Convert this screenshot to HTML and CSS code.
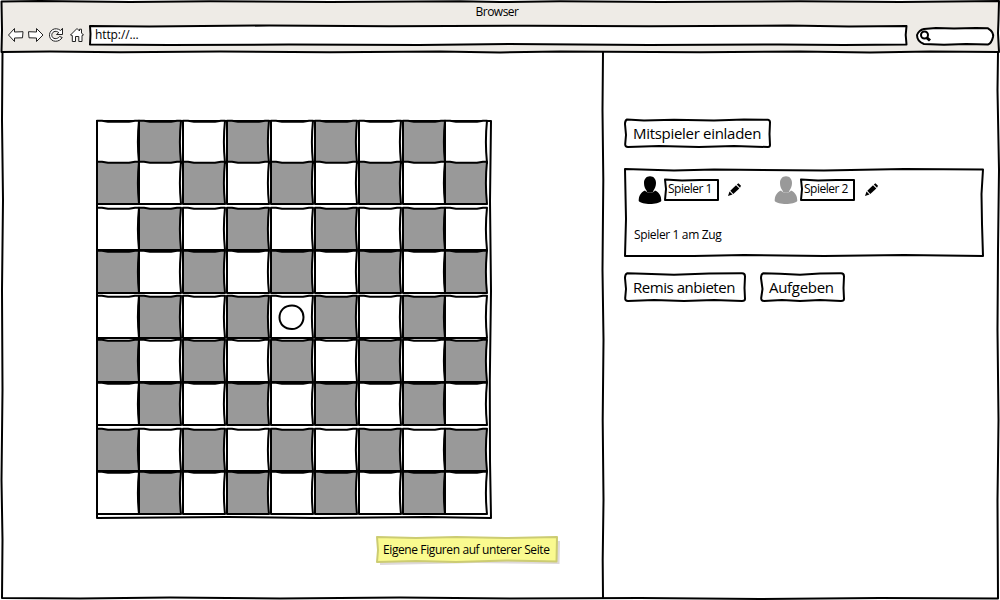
FILE: index.html
```html
<!DOCTYPE html>
<html lang="de">
<head>
<meta charset="utf-8">
<title>Browser</title>
<link rel="stylesheet" href="styles.css">
</head>
<body>
<svg class="defs" width="0" height="0">
  <defs>
    <path id="cell" d="M0 -.3L5 -.3L11 .8H32L38 -.3H42Q39.800 21 42 42H0Z"/>
    <g id="row-light" class="cells">
      <use href="#cell" class="light" x="0"/><use href="#cell" class="dark" x="42"/><use href="#cell" class="light" x="86"/><use href="#cell" class="dark" x="130"/><use href="#cell" class="light" x="174"/><use href="#cell" class="dark" x="218"/><use href="#cell" class="light" x="262"/><use href="#cell" class="dark" x="306"/><use href="#cell" class="light" x="348"/>
    </g>
    <g id="row-dark" class="cells">
      <use href="#cell" class="dark" x="0"/><use href="#cell" class="light" x="42"/><use href="#cell" class="dark" x="86"/><use href="#cell" class="light" x="130"/><use href="#cell" class="dark" x="174"/><use href="#cell" class="light" x="218"/><use href="#cell" class="dark" x="262"/><use href="#cell" class="light" x="306"/><use href="#cell" class="dark" x="348"/>
    </g>
    <g id="person"><path d="M11 -.8C14.800 -.8 17 2 17 6C17 9 15.800 12 14.500 13.500C15 16.500 7 16.500 7.500 13.500C6 12 5 9 5 6C5 2 7.200 -.8 11 -.8Z"/><path d="M6 13.500C8 16.500 14 16.500 16 13.500C20.500 15.500 22.300 19 22.300 24C19 28 3 28 -.3 24C-.3 19 1.500 15.500 6 13.500Z"/></g>
    <g id="pencil"><path d="M0 13L1.500 8.500L4.500 11.500Z"/><path d="M2.300 7.700L8 2.300L11.300 5.500L5.300 10.900Z"/><path d="M8.800 1.600L10.400 .2L13 2.800L12 4.800Z"/></g>
  </defs>
</svg>
<div class="window">
  <svg class="ink" viewBox="0 0 1000 600">
    <path class="chrome" d="M1.500 1.500L40 1L130 2L210 1.300L330 2L460 1.300L500 2L560 1.300L660 2L800 1.300L900 2L999 1L998.500 20L998 33L999 52L930 51.500L870 52.500L800 51.500L700 52.300L560 51.500L500 52.500L440 51.500L330 52.300L220 51.500L120 52.300L50 51.500L1.500 52L2 30Z"/>
    <path d="M2.500 52L2 120L3 200L2 290L2.500 390L1.500 480L2.500 540L2 598L80 598.500L170 597.500L280 598.500L400 597.500L510 598.500L640 598L760 599L880 598L998 598.500L997.500 500L998.500 420L997.500 330L998 250L999 170L997.500 90L998 52"/>
    <path d="M603 52L602.500 110L603.300 180L602.500 270L603.500 340L602.700 420L603.500 500L602.700 560L603 598"/>
  </svg>
  <div class="content">
    <header>
      <div class="title">Browser</div>
      <nav>
        <svg class="nav-icons" viewBox="0 0 78 16">
          <path d="M.5 8L6.500 1.500V5L15 4.700L14.500 10.800L6.500 11V14.500Z"/>
          <path d="M35 8L28.500 1.500V5L20.500 4.700L21 10.800L28.500 11V14.500Z"/>
          <path d="M52.700 3.500L54.500 1.300V7.500H48.500L50.800 5.600C47.500 2.800 43.500 5 43.800 8.500C44.200 12.300 49.500 12.700 51.600 9.500L54.200 10.500C51.500 15.500 43 15.800 41.600 9.500C40.500 3.500 47 -.8 52.700 3.500Z"/>
          <path d="M62.500 8L69 1.500L71.500 4V2.200H73.500V6L75.500 8L74 8.500V14.500H70.800V9.500H67.500V14.500H64.300V8.500Z"/>
        </svg>
        <div class="box url">
          <svg class="ink" viewBox="0 0 818 21"><path class="paper" d="M1 1L60 1.500L180 .5L300 1.300L440 .7L560 1.300L700 .5L760 1.500L817.500 1L816.700 10L817.500 19.500L755 20L690 19.500L560 20L420 19L330 20L200 19.500L80 20L1 19.500L1.500 9Z"/></svg>
          <span>http://...</span>
        </div>
        <svg class="search" viewBox="0 0 78 19"><path class="paper" d="M8 2L20 1L38 1.500L60 1L72 1.300Q78 5 77 10Q75.500 16.500 72 17.500L50 17L28 17.800L8 17Q1 14.500 1 8Q3 3 8 2Z"/><circle cx="8.500" cy="8" r="3.500"/><path class="handle" d="M11 10.800L14 13.500"/></svg>
      </nav>
    </header>
    <main>
      <section class="game">
        <div class="board">
          <svg class="ink" viewBox="0 0 394 397"><path d="M0 0H394L393 80L394 170L392.800 260L393 340L394 397L330 396L220 397L130 396L0 397Z"/></svg>
          <div class="rows">
            <svg><use href="#row-light"/></svg>
            <svg><use href="#row-dark"/></svg>
            <svg><use href="#row-light"/></svg>
            <svg><use href="#row-dark"/></svg>
            <svg><use href="#row-light"/><path d="M195 9.500C202 9.500 206.500 15 206.500 21C206.500 28 201.500 33 195 33C187.500 33 182.500 28 182.500 21.500C182.500 14.500 187.500 9.500 195 9.500Z"/></svg>
            <svg><use href="#row-dark"/></svg>
            <svg><use href="#row-light"/></svg>
            <svg><use href="#row-dark"/></svg>
            <svg><use href="#row-light"/></svg>
          </div>
        </div>
        <div class="box note">
          <svg class="ink" viewBox="0 0 182 27"><path class="shadow" d="M4 4L184 5L183.500 28L100 27L4 29Z"/><path class="sticky" d="M1 1L40 2L80 1L130 2L181 1L180.500 25.500L130 24.500L80 26L40 25L1 26L2 14Z"/></svg>
          <span>Eigene Figuren auf unterer Seite</span>
        </div>
      </section>
      <aside>
        <div class="box button invite">
          <svg class="ink" viewBox="0 0 147 29"><path d="M3 .5L20 1.500L50 .7L90 1.500L120 .5L144 .7Q146 1 146 3.500L145.500 15L146 26Q146 28 144 28L110 27L75 28L35 27L4 28Q1 28 1.200 25L2 16L1 5Q1 1.500 3 .5Z"/></svg>
          <span>Mitspieler einladen</span>
        </div>
        <div class="box players">
          <svg class="ink" viewBox="0 0 360 88"><path d="M1 0L50 1.500L90 .5L200 1.500L280 0L359 .5L357.500 25L358 55L359 87L280 86L200 87L120 86L70 87L1 87L2 50Z"/></svg>
          <div class="players-content">
            <div class="player-row">
              <svg class="person" viewBox="0 0 22 28"><use href="#person"/></svg>
              <div class="box name"><svg class="ink" viewBox="0 0 55 22"><path d="M1 .5L18 1.500L36 1H54V21H1L2 10Z"/></svg><span>Spieler 1</span></div>
              <svg class="pencil" viewBox="0 0 13 13"><use href="#pencil"/></svg>
              <svg class="person waiting" viewBox="0 0 22 28"><use href="#person"/></svg>
              <div class="box name"><svg class="ink" viewBox="0 0 55 22"><path d="M1 .5L18 1.500L36 1H54V21H1L2 10Z"/></svg><span>Spieler 2</span></div>
              <svg class="pencil second" viewBox="0 0 13 13"><use href="#pencil"/></svg>
            </div>
            <div class="turn">Spieler 1 am Zug</div>
          </div>
        </div>
        <div class="actions">
          <div class="box button draw">
            <svg class="ink" viewBox="0 0 122 29"><path d="M3 .3L20 .8L50 1.800L85 .6L118 .3Q121 .3 121 3.500L120.500 15L121 26Q121 28 118 28L90 27L60 28L30 27L4 28Q1 28 1.200 25L2 16L1 5Q1 1.300 3 .3Z"/></svg>
            <span>Remis anbieten</span>
          </div>
          <div class="box button resign">
            <svg class="ink" viewBox="0 0 85 29"><path d="M3 .3L20 .8L40 1.800L60 .6L81 .3Q84 .3 84 3.500L83.500 15L84 26Q84 28 81 28L60 27L40 28L22 27L4 28Q1 28 1.200 25L2.500 16L1 5Q1 1.300 3 .3Z"/></svg>
            <span>Aufgeben</span>
          </div>
        </div>
      </aside>
    </main>
  </div>
</div>
</body>
</html>
```
FILE: styles.css
```css
* { box-sizing: border-box; }
body {
  margin: 0;
  background: #fff;
  color: #000;
  font: 12px/16px "Open Sans", "Noto Sans", sans-serif;
  letter-spacing: -.36px;
  overflow: hidden;
}
.defs { display: block; }
svg { display: block; overflow: visible; fill: none; stroke: #000; stroke-width: 2; stroke-linejoin: round; }
.window, .box, .board { display: grid; }
.window > *, .box > *, .board > * { grid-area: 1 / 1; min-width: 0; min-height: 0; }
.ink { width: 100%; height: 100%; }
.window { width: 1000px; height: 600px; }
.chrome { fill: #eeebe6; }
.paper { fill: #fff; }
.box { align-items: center; }
.box span { white-space: nowrap; }

header { height: 52px; }
.title { height: 25px; padding: 4px 6px 0 0; text-align: center; letter-spacing: -.5px; }
nav { display: flex; }
.nav-icons { width: 78px; height: 16px; margin: 2px 3px 0 8px; fill: #fff; stroke: #222; stroke-width: 1; }
.url { width: 818px; height: 21px; }
.url span { padding: 0 0 2px 6px; letter-spacing: -.1px; }
.search { width: 78px; height: 19px; margin: 2px 0 0 9px; }
.handle { stroke-width: 3; }

main { display: flex; }
.game { width: 603px; padding: 69px 0 0 97px; }
.board { width: 394px; height: 397px; }
.rows { display: grid; grid-template-rows: 41px 46px 43px 45px 44px 43px 46px 43px 42px; }
.rows svg { width: 390px; height: 42px; }
.light { fill: #fff; }
.dark { fill: #999; }
.note { width: 182px; height: 27px; margin: 18px 0 0 279px; }
.note span { padding-left: 7px; letter-spacing: -.4px; }
.shadow { fill: #ded9da; stroke: none; }
.sticky { fill: #fafa8f; stroke: #cccc72; }

aside { padding: 67px 0 0 21px; }
.button { height: 29px; font-size: 15px; line-height: 20px; letter-spacing: -.3px; }
.button span { padding: 0 0 2px 9px; }
.invite { width: 147px; }
.players { width: 360px; height: 88px; margin: 21px 0 16px; align-items: stretch; }
.player-row { display: flex; padding: 8px 0 0 15px; }
.person { width: 22px; height: 28px; fill: #000; stroke: none; }
.waiting { fill: #999; margin-left: 34px; }
.name { width: 55px; height: 22px; margin: 2px 0 0 3px; }
.name span { padding: 0 0 2px 4px; letter-spacing: -.5px; }
.pencil { width: 13px; height: 13px; margin: 6px 0 0 9px; fill: #000; stroke: none; }
.second { margin-left: 10px; }
.turn { padding: 22px 0 0 10px; }
.actions { display: flex; gap: 14px; }
.draw { width: 122px; }
.draw span { letter-spacing: -.45px; }
.resign { width: 85px; }
```
